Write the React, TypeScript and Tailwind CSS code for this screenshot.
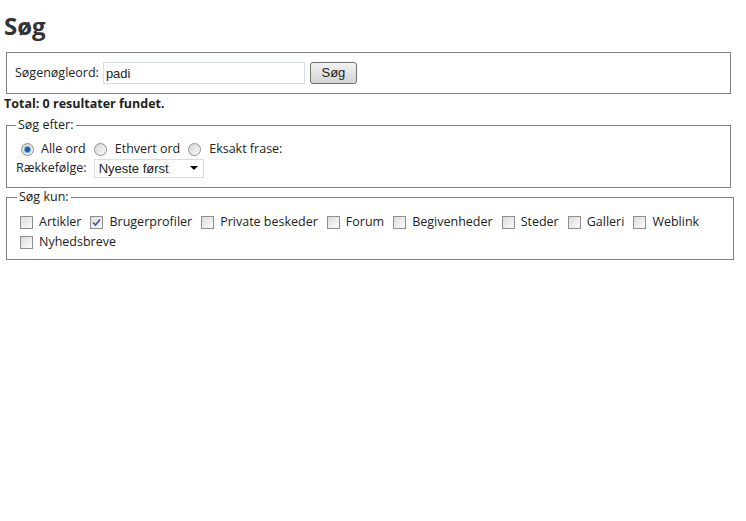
import React from 'react';

const font = { fontFamily: '"Open Sans", "DejaVu Sans", sans-serif' };
const arial = { fontFamily: '"Liberation Sans", Arial, sans-serif' };

function Checkbox({ checked = false }: { checked?: boolean }) {
  return (
    <span className="inline-flex w-[13px] h-[13px] border border-[#8f8f8f] bg-gradient-to-br from-[#dcdcdc] to-[#fbfbfb] items-center justify-center shrink-0">
      {checked && (
        <svg width="9" height="9" viewBox="0 0 9 9">
          <path d="M1 4.5 L3.5 7 L8 1.5" fill="none" stroke="#3553a8" strokeWidth="1.6" />
        </svg>
      )}
    </span>
  );
}

function Radio({ checked = false }: { checked?: boolean }) {
  return (
    <span className="inline-flex w-[13px] h-[13px] rounded-full border border-[#8f8f8f] bg-gradient-to-br from-[#d6d6d6] to-[#fbfbfb] items-center justify-center shrink-0">
      {checked && <span className="w-[5px] h-[5px] rounded-full bg-[#1f5e9c] shadow-[0_0_1px_1px_#6fa6d8]" />}
    </span>
  );
}

const kinds = ['Artikler', 'Brugerprofiler', 'Private beskeder', 'Forum', 'Begivenheder', 'Steder', 'Galleri', 'Weblink', 'Nyhedsbreve'];

export default function App() {
  return (
    <div className="bg-white min-h-[521px] pl-[4px] pt-[10px] text-[12.5px] text-[#222]" style={font}>
      <h1 className="text-[24px] font-bold leading-[32px] text-[#333]">Søg</h1>

      <div className="ml-[2px] mt-[10px] w-[725px] border border-[#808080] h-[42px] flex items-center pl-[8px] gap-[4px]">
        <span>Søgenøgleord:</span>
        <input
          defaultValue="padi"
          className="w-[202px] h-[22px] border border-[#d8dde3] px-[2px] text-[13px] outline-none"
          style={arial}
        />
        <button
          className="ml-[1px] w-[47px] h-[22px] border border-[#707070] rounded-[3px] bg-gradient-to-b from-[#f2f2f2] to-[#d4d4d4] text-[13px]"
          style={arial}
        >
          Søg
        </button>
      </div>

      <div className="font-bold mt-[1px] leading-[17px]">Total: 0 resultater fundet.</div>

      <fieldset className="ml-[2px] mt-[4px] w-[725px] border border-[#808080] px-[9px] pb-[9px]">
        <legend className="px-[2px] ml-[0px]">Søg efter:</legend>
        <div className="flex items-center h-[19px] mt-[5px] pl-[5px]">
          <Radio checked />
          <span className="ml-[7px] mr-[8px]">Alle ord</span>
          <Radio />
          <span className="ml-[8px] mr-[8px]">Ethvert ord</span>
          <Radio />
          <span className="ml-[8px]">Eksakt frase:</span>
        </div>
        <div className="flex items-center gap-[7px] h-[19px]">
          <span>Rækkefølge:</span>
          <span
            className="w-[110px] h-[19px] border border-[#d8dde3] flex items-center justify-between pl-[4px] pr-[5px] text-[13px]"
            style={arial}
          >
            Nyeste først
            <svg width="8" height="4" viewBox="0 0 8 4">
              <path d="M0 0 H8 L4 4 Z" fill="#000" />
            </svg>
          </span>
        </div>
      </fieldset>

      <fieldset className="ml-[2px] mt-[0px] w-[725px] border border-[#808080] px-[13px] pb-[8px]">
        <legend className="px-[2px] -ml-[3px]">Søg kun:</legend>
        <div className="flex flex-wrap items-center mt-[8px] gap-y-[4px] w-[700px]">
          {kinds.map((k, i) => (
            <span key={k} className="flex items-center h-[16px] mr-[9px]">
              <Checkbox checked={i === 1} />
              <span className="ml-[6px]">{k}</span>
            </span>
          ))}
        </div>
      </fieldset>
    </div>
  );
}
